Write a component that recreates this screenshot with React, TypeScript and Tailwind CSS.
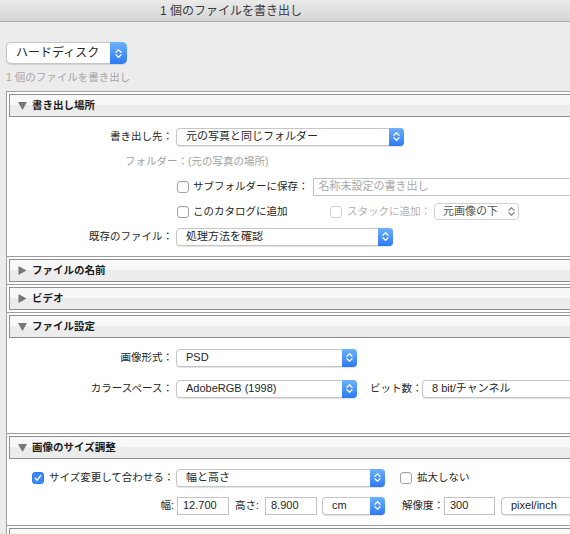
import React from "react";

function Chevrons({ color = "#ffffff" }: { color?: string }) {
  return (
    <svg width="7" height="11" viewBox="0 0 7 11" fill="none">
      <path d="M1 4.2 L3.5 1.6 L6 4.2" stroke={color} strokeWidth="1.3" strokeLinecap="round" strokeLinejoin="round" />
      <path d="M1 6.8 L3.5 9.4 L6 6.8" stroke={color} strokeWidth="1.3" strokeLinecap="round" strokeLinejoin="round" />
    </svg>
  );
}

function Popup({ text, w, blue = true }: { text: string; w: string; blue?: boolean }) {
  return (
    <div className={`${w} h-[18px] flex items-center rounded-[4px] border border-[#c6c6c6] bg-white shadow-[0_0.5px_1px_rgba(0,0,0,0.12)] shrink-0`}>
      <span className="flex-1 pl-[9px] text-[11px] leading-none text-[#262626] whitespace-nowrap overflow-hidden">{text}</span>
      {blue && (
        <div className="w-[15px] h-[18px] -mr-px rounded-r-[4px] bg-gradient-to-b from-[#6cb0fd] to-[#2b79f3] flex items-center justify-center">
          <Chevrons />
        </div>
      )}
    </div>
  );
}

function Checkbox({ checked = false, disabled = false }: { checked?: boolean; disabled?: boolean }) {
  if (checked) {
    return (
      <div className="w-[12px] h-[12px] rounded-[3px] bg-[#3b88f6] border border-[#2f7ced] flex items-center justify-center shrink-0">
        <svg width="8" height="8" viewBox="0 0 8 8" fill="none">
          <path d="M1.3 4.2 L3.2 6.1 L6.7 1.6" stroke="#fff" strokeWidth="1.5" strokeLinecap="round" strokeLinejoin="round" />
        </svg>
      </div>
    );
  }
  return (
    <div
      className={`w-[12px] h-[12px] rounded-[3px] bg-white border shrink-0 ${disabled ? "border-[#d2d2d2]" : "border-[#a4a4a4] shadow-[inset_0_1px_1px_rgba(0,0,0,0.06)]"}`}
    />
  );
}

function Field({ w, text, placeholder = false }: { w: string; text: string; placeholder?: boolean }) {
  return (
    <div className={`${w} h-[18px] border border-[#c3c3c3] bg-white flex items-center pl-[5px] shrink-0`}>
      <span className={`text-[11px] leading-none whitespace-nowrap ${placeholder ? "text-[#a8a8a8]" : "text-[#262626]"}`}>{text}</span>
    </div>
  );
}

function Header({ title, open }: { title: string; open: boolean }) {
  return (
    <div className="h-[23px] border border-[#8e8e8e] bg-[linear-gradient(to_bottom,#f8f8f8_50%,#ececec_50%)] flex items-center pl-[8px] gap-[5px]">
      {open ? (
        <svg width="9" height="8" viewBox="0 0 9 8">
          <polygon points="0,0 9,0 4.5,8" fill="#777777" />
        </svg>
      ) : (
        <svg width="9" height="9" viewBox="0 0 9 9">
          <polygon points="0.5,0 8.5,4.5 0.5,9" fill="#777777" />
        </svg>
      )}
      <span className="text-[10.5px] font-bold leading-none text-[#1d1d1d]">{title}</span>
    </div>
  );
}

function Label({ text, w = "w-[166px]", gray = false }: { text: string; w?: string; gray?: boolean }) {
  return (
    <div className={`${w} shrink-0 text-right text-[10.5px] leading-none whitespace-nowrap ${gray ? "text-[#a3a3a3]" : "text-[#262626]"}`}>
      {text}
    </div>
  );
}

export default function App() {
  return (
    <div className="w-[570px] h-[534px] overflow-hidden bg-[#ececec] font-['Liberation_Sans','Noto_Sans_CJK_JP',sans-serif] text-[#262626]">
      {/* title bar */}
      <div className="h-[22px] border-b border-[#adadad] bg-gradient-to-b from-[#eaeaea] to-[#d5d5d5] flex items-center pl-[160px]">
        <span className="text-[12px] leading-none text-[#3a3a3a]">1 個のファイルを書き出し</span>
      </div>

      {/* destination popup */}
      <div className="pt-[20px] pl-[6px]">
        <div className="w-[121px] h-[22px] flex items-center rounded-[5px] border border-[#c6c6c6] bg-white shadow-[0_0.5px_1px_rgba(0,0,0,0.12)]">
          <span className="flex-1 pl-[9px] text-[12px] leading-none text-[#262626] whitespace-nowrap">ハードディスク</span>
          <div className="w-[17px] h-[22px] -mr-px rounded-r-[5px] bg-gradient-to-b from-[#6cb0fd] to-[#2b79f3] flex items-center justify-center">
            <Chevrons />
          </div>
        </div>
      </div>
      <div className="h-[27px] flex items-center pl-[6px]">
        <span className="text-[10.5px] leading-none text-[#a6a6a6]">1 個のファイルを書き出し</span>
      </div>

      {/* panel */}
      <div className="ml-[6px] w-[620px] border-l border-t border-[#a0a0a0] bg-white">
        {/* section 1 */}
        <div className="pt-[2px] pl-[2px]">
          <Header title="書き出し場所" open />
        </div>
        <div className="pt-[7px] pb-[7px]">
          <div className="h-[25px] flex items-center">
            <Label text="書き出し先：" />
            <div className="ml-[3px]">
              <Popup text="元の写真と同じフォルダー" w="w-[228px]" />
            </div>
          </div>
          <div className="h-[25px] flex items-center">
            <Label text="フォルダー：" w="w-[181px]" gray />
            <span className="text-[10.5px] leading-none text-[#a3a3a3]">(元の写真の場所)</span>
          </div>
          <div className="h-[25px] flex items-center">
            <div className="w-[170px] shrink-0" />
            <Checkbox />
            <span className="ml-[4px] text-[10.5px] leading-none whitespace-nowrap">サブフォルダーに保存：</span>
            <div className="ml-[4px]">
              <Field w="w-[300px]" text="名称未設定の書き出し" placeholder />
            </div>
          </div>
          <div className="h-[25px] flex items-center">
            <div className="w-[170px] shrink-0" />
            <div className="w-[153px] shrink-0 flex items-center">
              <Checkbox />
              <span className="ml-[4px] text-[10.5px] leading-none whitespace-nowrap">このカタログに追加</span>
            </div>
            <Checkbox disabled />
            <span className="ml-[5px] text-[10.5px] leading-none whitespace-nowrap text-[#b0b0b0]">スタックに追加：</span>
            <div className="ml-[3px] w-[85px] h-[17px] flex items-center rounded-[4px] border border-[#d2d2d2] bg-white shrink-0">
              <span className="flex-1 pl-[8px] text-[11px] leading-none text-[#555] whitespace-nowrap">元画像の下</span>
              <div className="w-[14px] flex items-center justify-center">
                <Chevrons color="#8c8c8c" />
              </div>
            </div>
          </div>
          <div className="h-[25px] flex items-center">
            <Label text="既存のファイル：" />
            <div className="ml-[3px]">
              <Popup text="処理方法を確認" w="w-[217px]" />
            </div>
          </div>
        </div>

        {/* section 2 */}
        <div className="border-t border-[#9c9c9c] pt-[2px] pl-[2px] pb-[2px]">
          <Header title="ファイルの名前" open={false} />
        </div>

        {/* section 3 */}
        <div className="border-t border-[#9c9c9c] pt-[2px] pl-[2px] pb-[2px]">
          <Header title="ビデオ" open={false} />
        </div>

        {/* section 4 */}
        <div className="border-t border-[#9c9c9c] pt-[2px] pl-[2px]">
          <Header title="ファイル設定" open />
        </div>
        <div className="pt-[7px] pb-[32px]">
          <div className="h-[25px] flex items-center">
            <Label text="画像形式：" />
            <div className="ml-[3px]">
              <Popup text="PSD" w="w-[181px]" />
            </div>
          </div>
          <div className="mt-[6px] h-[25px] flex items-center">
            <Label text="カラースペース：" />
            <div className="ml-[3px]">
              <Popup text="AdobeRGB (1998)" w="w-[181px]" />
            </div>
            <span className="ml-[13px] w-[52px] shrink-0 text-[10.5px] leading-none whitespace-nowrap">ビット数：</span>
            <div className="ml-[0px]">
              <Popup text="8 bit/チャンネル" w="w-[170px]" blue={false} />
            </div>
          </div>
        </div>

        {/* section 5 */}
        <div className="border-t border-[#9c9c9c] pt-[2px] pl-[2px]">
          <Header title="画像のサイズ調整" open />
        </div>
        <div className="pt-[6px] pb-[7px]">
          <div className="h-[25px] flex items-center">
            <div className="w-[169px] shrink-0 flex items-center pl-[25px]">
              <Checkbox checked />
              <span className="ml-[5px] text-[10.5px] leading-none whitespace-nowrap">サイズ変更して合わせる：</span>
            </div>
            <Popup text="幅と高さ" w="w-[209px]" />
            <div className="ml-[15px] flex items-center">
              <Checkbox />
              <span className="ml-[5px] text-[10.5px] leading-none whitespace-nowrap">拡大しない</span>
            </div>
          </div>
          <div className="mt-[3px] h-[25px] flex items-center">
            <Label text="幅:" w="w-[167px]" />
            <div className="ml-[3px]">
              <Field w="w-[52px]" text="12.700" />
            </div>
            <span className="ml-[6px] w-[24px] shrink-0 text-[10.5px] leading-none whitespace-nowrap">高さ:</span>
            <div className="ml-[6px]">
              <Field w="w-[52px]" text="8.900" />
            </div>
            <div className="ml-[5px]">
              <Popup text="cm" w="w-[63px]" />
            </div>
            <span className="ml-[17px] w-[42px] shrink-0 text-[10.5px] leading-none whitespace-nowrap">解像度：</span>
            <div className="ml-[0px]">
              <Field w="w-[51px]" text="300" />
            </div>
            <div className="ml-[6px]">
              <Popup text="pixel/inch" w="w-[110px]" blue={false} />
            </div>
          </div>
        </div>

        {/* section 6 */}
        <div className="border-t border-[#9c9c9c] pt-[2px] pl-[2px]">
          <div className="h-[23px] border border-[#8e8e8e] bg-[linear-gradient(to_bottom,#f8f8f8_50%,#ececec_50%)]" />
        </div>
      </div>
    </div>
  );
}
